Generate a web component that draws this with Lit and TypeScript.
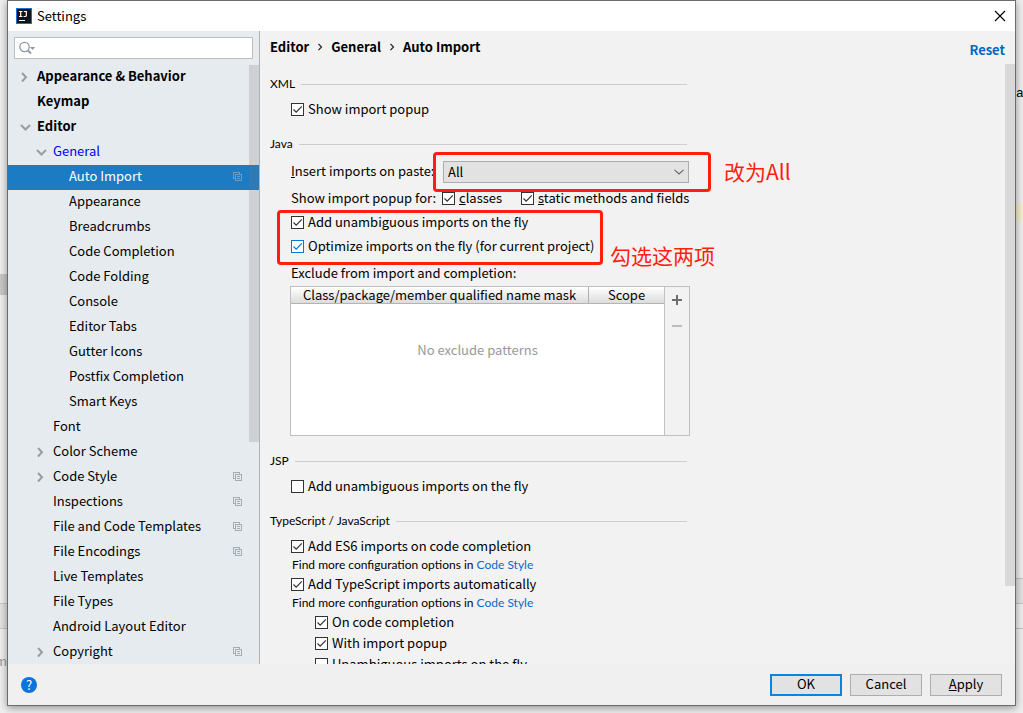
import { LitElement, html, css, svg, nothing } from "lit";
import { customElement, property } from "lit/decorators.js";

interface TreeItem {
  label: string;
  level: 1 | 2 | 3;
  arrow?: "open" | "closed";
  shared?: boolean;
  selected?: boolean;
  modified?: boolean;
}

const TREE: TreeItem[] = [
  { label: "Appearance & Behavior", level: 1, arrow: "closed" },
  { label: "Keymap", level: 1 },
  { label: "Editor", level: 1, arrow: "open" },
  { label: "General", level: 2, arrow: "open", modified: true },
  { label: "Auto Import", level: 3, shared: true, selected: true },
  { label: "Appearance", level: 3 },
  { label: "Breadcrumbs", level: 3 },
  { label: "Code Completion", level: 3 },
  { label: "Code Folding", level: 3 },
  { label: "Console", level: 3 },
  { label: "Editor Tabs", level: 3 },
  { label: "Gutter Icons", level: 3 },
  { label: "Postfix Completion", level: 3 },
  { label: "Smart Keys", level: 3 },
  { label: "Font", level: 2 },
  { label: "Color Scheme", level: 2, arrow: "closed" },
  { label: "Code Style", level: 2, arrow: "closed", shared: true },
  { label: "Inspections", level: 2, shared: true },
  { label: "File and Code Templates", level: 2, shared: true },
  { label: "File Encodings", level: 2, shared: true },
  { label: "Live Templates", level: 2 },
  { label: "File Types", level: 2 },
  { label: "Android Layout Editor", level: 2 },
  { label: "Copyright", level: 2, arrow: "closed", shared: true },
];

@customElement("settings-tree")
class SettingsTree extends LitElement {
  static styles = css`
    :host {
      display: flex;
      flex-direction: column;
      min-height: 0;
      background: #e6ebf0;
      border-right: 1px solid #b0b3b6;
    }
    .search {
      display: flex;
      align-items: center;
      height: 22px;
      box-sizing: border-box;
      margin: 6px;
      padding-left: 4px;
      background: #fff;
      border: 1px solid #bdbdbd;
    }
    .search input {
      flex: 1;
      min-width: 0;
      border: 0;
      outline: 0;
      background: none;
      font: inherit;
    }
    .scroller {
      flex: 1;
      min-height: 0;
      overflow: hidden;
      position: relative;
    }
    .list {
      margin: 0;
      padding: 0;
      list-style: none;
    }
    .row {
      display: flex;
      align-items: center;
      gap: 4px;
      height: 25px;
      box-sizing: border-box;
      padding: 0 17px 2px 9px;
      white-space: nowrap;
    }
    .level-1 {
      font-weight: 700;
    }
    .level-2 {
      padding-left: 25px;
    }
    .level-3 {
      padding-left: 41px;
    }
    .modified {
      color: #0000ff;
    }
    .selected {
      background: #1b7cc4;
      color: #fff;
    }
    .arrow {
      flex: none;
      width: 16px;
      height: 16px;
    }
    .label {
      flex: 1;
      padding-bottom: 1px;
    }
    .thumb {
      position: absolute;
      top: 0;
      right: 0;
      width: 10px;
      height: 63%;
      background: rgba(120, 120, 124, 0.22);
    }
  `;

  private arrow(kind?: "open" | "closed") {
    return html`<svg class="arrow" viewBox="0 0 16 16" fill="none" stroke="#9a9da0" stroke-width="2">
      ${kind === "open"
        ? svg`<path d="M4 6 L8.5 10.5 L13 6" />`
        : kind === "closed"
          ? svg`<path d="M5 4 L9 8.25 L5 12.5" />`
          : nothing}
    </svg>`;
  }

  render() {
    return html`
      <label class="search">
        <svg width="18" height="16" viewBox="0 0 18 16" fill="none" stroke="#8b98a5">
          <circle cx="5.5" cy="7" r="4.7" stroke-width="1.3" />
          <path d="M9 10.5 L12 13.5" stroke-width="1.8" />
          <path d="M11 7 H16 L13.5 10 Z" fill="#8b98a5" stroke="none" />
        </svg>
        <input type="text" aria-label="Search settings" />
      </label>
      <div class="scroller">
        <ul class="list">
          ${TREE.map(
            (item) => html`<li
              class="row level-${item.level} ${item.selected ? "selected" : ""} ${item.modified ? "modified" : ""}"
            >
              ${this.arrow(item.arrow)}
              <span class="label">${item.label}</span>
              ${item.shared
                ? html`<svg
                    width="9"
                    height="9"
                    viewBox="0 0 9 9"
                    fill="none"
                    stroke=${item.selected ? "#6c9dc4" : "#a3adb6"}
                    shape-rendering="crispEdges"
                  >
                    <path d="M2 6.5 H0.5 V0.5 H6.5 V2" />
                    <path d="M2.5 2.5 H8.5 V8.5 H2.5 Z M4 4.5 H7 M4 6.5 H7" />
                  </svg>`
                : nothing}
            </li>`
          )}
        </ul>
        <div class="thumb"></div>
      </div>
    `;
  }
}

@customElement("check-option")
class CheckOption extends LitElement {
  @property() label = "";
  @property() mnemonic = "";
  @property({ type: Boolean }) checked = false;
  @property({ type: Boolean }) active = false;

  static styles = css`
    :host {
      display: block;
    }
    .option {
      display: flex;
      align-items: center;
      gap: 4px;
      height: 20px;
      box-sizing: border-box;
      padding-bottom: 1px;
      white-space: nowrap;
    }
    .text {
      padding-bottom: 1px;
    }
    .box {
      flex: none;
      appearance: none;
      box-sizing: border-box;
      width: 13px;
      height: 13px;
      margin: 0;
      border: 1px solid #333;
      background: #fff;
    }
    .box:checked {
      background: #fff
        url("data:image/svg+xml,%3Csvg xmlns='http://www.w3.org/2000/svg' viewBox='0 0 11 11'%3E%3Cpath d='M1.5 5.5 L4.2 8.2 L9.8 2.4' fill='none' stroke='%23333' stroke-width='1.2'/%3E%3C/svg%3E");
    }
    .active {
      border-color: #0078d7;
    }
    .active:checked {
      background: #fff
        url("data:image/svg+xml,%3Csvg xmlns='http://www.w3.org/2000/svg' viewBox='0 0 11 11'%3E%3Cpath d='M1.5 5.5 L4.2 8.2 L9.8 2.4' fill='none' stroke='%230078d7' stroke-width='1.2'/%3E%3C/svg%3E");
    }
  `;

  render() {
    return html`<label class="option">
      <input class="box ${this.active ? "active" : ""}" type="checkbox" .checked=${this.checked} />
      <span class="text">${this.mnemonic ? html`<u>${this.mnemonic}</u>` : nothing}${this.label}</span>
    </label>`;
  }
}

@customElement("auto-import-page")
class AutoImportPage extends LitElement {
  static styles = css`
    :host {
      display: flex;
      flex-direction: column;
      min-height: 0;
      min-width: 0;
      background: #f2f2f2;
    }
    .top {
      display: flex;
      justify-content: space-between;
      height: 33px;
      padding: 0 10px;
      font-weight: 700;
    }
    .crumbs {
      display: flex;
      align-items: center;
      gap: 8px;
      padding-bottom: 1px;
    }
    .reset {
      align-self: flex-end;
      line-height: 28px;
      color: #0068c0;
      text-decoration: none;
    }
    .scroller {
      flex: 1;
      min-height: 0;
      overflow: hidden;
      position: relative;
    }
    .thumb {
      position: absolute;
      top: 0;
      right: 0;
      width: 10px;
      height: 87%;
      background: #d9d9d9;
    }
    .form {
      max-width: 420px;
      padding: 10px 10px 0;
    }
    .group {
      display: flex;
      align-items: center;
      gap: 6px;
      height: 20px;
      margin: 14px 3px 6px 0;
      font-family: Lato, sans-serif;
      font-size: 12px;
    }
    .group:first-child {
      margin-top: 0;
    }
    .group::after {
      content: "";
      flex: 1;
      height: 1px;
      background: #cdcdcd;
    }
    .body {
      padding-left: 21px;
    }
    .stack {
      display: grid;
      gap: 4px;
    }
    .paste {
      position: relative;
      display: grid;
      grid-template-columns: 152px minmax(0, 1fr);
      align-items: center;
      margin: 7px 1px 6px 0;
      white-space: nowrap;
    }
    .combo {
      height: 22px;
      appearance: none;
      padding: 0 4px;
      border: 1px solid #adadad;
      border-radius: 0;
      color: #000;
      font: inherit;
      background: #e2e2e2
        url("data:image/svg+xml,%3Csvg xmlns='http://www.w3.org/2000/svg' width='10' height='6'%3E%3Cpath d='M0.5 0.8 L5 5 L9.5 0.8' fill='none' stroke='%23666' stroke-width='1.1'/%3E%3C/svg%3E")
        no-repeat right 4px center;
    }
    .popup-for {
      display: grid;
      grid-template-columns: 151px 79px auto;
      align-items: center;
      margin-bottom: 4px;
      white-space: nowrap;
    }
    .text {
      padding-bottom: 2px;
    }
    .onfly {
      position: relative;
    }
    .mark {
      position: absolute;
      border: 3px solid #ff1e10;
      border-radius: 4px;
      pointer-events: none;
    }
    .note {
      position: absolute;
      color: #ff1e10;
      font: 400 21px/24px "Noto Sans CJK SC", sans-serif;
      white-space: nowrap;
    }
    .mark-paste {
      inset: -9px -22px -9px 142px;
    }
    .note-paste {
      left: calc(100% + 35px);
      top: -2px;
    }
    .mark-fly {
      inset: -3px 87px -8px -14px;
    }
    .note-fly {
      left: calc(100% - 80px);
      top: 30px;
    }
    .caption {
      margin: 6px 0 3px;
      line-height: 20px;
    }
    .patterns {
      display: flex;
      height: 150px;
      box-sizing: border-box;
      margin: 0 0 15px -1px;
      border: 1px solid #c0c0c0;
    }
    .grid {
      flex: 1;
      display: flex;
      flex-direction: column;
      background: #fff;
    }
    .grid table {
      width: 100%;
      border-collapse: collapse;
      table-layout: fixed;
    }
    .grid th {
      height: 16px;
      padding: 0;
      line-height: 16px;
      font-weight: 400;
      background: linear-gradient(#fff, #dcdcdc);
      border-bottom: 1px solid #b4b4b4;
    }
    .grid th + th {
      width: 75px;
      border-left: 1px solid #b0b0b0;
    }
    .empty {
      margin-top: 36px;
      line-height: 20px;
      text-align: center;
      color: #999;
    }
    .tools {
      display: flex;
      flex-direction: column;
      align-items: center;
      width: 24px;
      border-left: 1px solid #c0c0c0;
    }
    .tool {
      display: flex;
      align-items: center;
      justify-content: center;
      width: 24px;
      height: 26px;
      padding: 0;
      border: 0;
      background: none;
    }
    .hint {
      margin: 0 0 2px 1px;
      font-family: Lato, sans-serif;
      font-size: 12px;
      line-height: 16px;
      white-space: nowrap;
    }
    .hint a {
      color: #0a6ac8;
      text-decoration: none;
    }
    .nested {
      display: grid;
      gap: 1px;
      padding-left: 24px;
    }
  `;

  private hint() {
    return html`<p class="hint">Find more configuration options in <a href="#code-style">Code Style</a></p>`;
  }

  private crumbArrow() {
    return html`<svg width="6" height="8" viewBox="0 0 6 8" fill="none" stroke="#222" stroke-width="1.2">
      <path d="M1.5 0.8 L4.5 4 L1.5 7.2" />
    </svg>`;
  }

  render() {
    return html`
      <div class="top">
        <nav class="crumbs">
          <span>Editor</span>${this.crumbArrow()}<span>General</span>${this.crumbArrow()}<span>Auto Import</span>
        </nav>
        <a class="reset" href="#reset">Reset</a>
      </div>
      <div class="scroller">
        <div class="form">
          <div class="group">XML</div>
          <div class="body"><check-option checked label="Show import popup"></check-option></div>

          <div class="group">Java</div>
          <div class="body">
            <div class="paste">
              <label class="text" for="paste"><u>I</u>nsert imports on paste:</label>
              <select id="paste" class="combo">
                <option>All</option>
                <option>Ask</option>
                <option>None</option>
              </select>
              <div class="mark mark-paste"></div>
              <span class="note note-paste">改为All</span>
            </div>
            <div class="popup-for">
              <span class="text">Show import popup for:</span>
              <check-option checked mnemonic="c" label="lasses"></check-option>
              <check-option checked mnemonic="s" label="tatic methods and fields"></check-option>
            </div>
            <div class="onfly stack">
              <check-option checked label="Add unambiguous imports on the fly"></check-option>
              <check-option checked active label="Optimize imports on the fly (for current project)"></check-option>
              <div class="mark mark-fly"></div>
              <span class="note note-fly">勾选这两项</span>
            </div>
            <div class="caption">Exclude from import and completion:</div>
            <div class="patterns">
              <div class="grid">
                <table>
                  <thead>
                    <tr>
                      <th>Class/package/member qualified name mask</th>
                      <th>Scope</th>
                    </tr>
                  </thead>
                </table>
                <div class="empty">No exclude patterns</div>
              </div>
              <div class="tools">
                <button class="tool" aria-label="Add">
                  <svg width="10" height="10" viewBox="0 0 10 10"><path d="M4 0h2v4h4v2H6v4H4V6H0V4h4z" fill="#6e6e6e" /></svg>
                </button>
                <button class="tool" aria-label="Remove" disabled>
                  <svg width="10" height="10" viewBox="0 0 10 10"><path d="M0 4h10v2H0z" fill="#bdbdbd" /></svg>
                </button>
              </div>
            </div>
          </div>

          <div class="group">JSP</div>
          <div class="body"><check-option label="Add unambiguous imports on the fly"></check-option></div>

          <div class="group">TypeScript / JavaScript</div>
          <div class="body">
            <check-option checked label="Add ES6 imports on code completion"></check-option>
            ${this.hint()}
            <check-option checked label="Add TypeScript imports automatically"></check-option>
            ${this.hint()}
            <div class="nested">
              <check-option checked label="On code completion"></check-option>
              <check-option checked label="With import popup"></check-option>
              <check-option label="Unambiguous imports on the fly"></check-option>
            </div>
          </div>
        </div>
        <div class="thumb"></div>
      </div>
    `;
  }
}

@customElement("app-root")
class AppRoot extends LitElement {
  static styles = css`
    :host {
      display: grid;
      grid-template-columns: 7px minmax(0, 1fr) 7px;
      grid-template-rows: minmax(0, 1fr);
      height: 100vh;
      overflow: hidden;
      background: #efefef;
      color: #000;
      font: 13px/18px "Noto Sans CJK SC", sans-serif;
    }
    .edge {
      display: flex;
      flex-direction: column;
      overflow: hidden;
    }
    .edge-scroll {
      flex: none;
      height: 21px;
      margin-top: 274px;
      background: #c8c8c8;
    }
    .edge-bar {
      flex: none;
      height: 24px;
      border: solid #c4c4c4;
      border-width: 1px 0;
      background: #e2e2e2;
    }
    .left .edge-bar {
      margin-top: 308px;
    }
    .edge-text {
      margin-top: 23px;
      color: #999;
      direction: rtl;
    }
    .edge-code {
      margin-top: 85px;
      font-family: "Liberation Mono", monospace;
    }
    .edge-warn {
      flex: none;
      height: 17px;
      margin-top: 101px;
      background: #f5efd0;
    }
    .right .edge-bar {
      margin-top: 357px;
    }
    .edge-rule {
      height: 24px;
      border-bottom: 1px solid #c4c4c4;
    }
    .dialog {
      position: relative;
      display: grid;
      grid-template-rows: 30px minmax(0, 1fr) 41px;
      margin-bottom: 7px;
      border: 1px solid #6c6c6e;
      background: #f0f0f0;
      box-shadow: 0 2px 8px rgba(0, 0, 0, 0.4);
    }
    .title {
      display: flex;
      align-items: center;
      gap: 5px;
      padding: 0 9px 0 8px;
      background: #fff;
    }
    .title-text {
      flex: 1;
      padding-bottom: 1px;
    }
    .close {
      display: flex;
      padding: 0;
      border: 0;
      background: none;
    }
    .main {
      display: grid;
      grid-template-columns: 252px minmax(0, 1fr);
      grid-template-rows: minmax(0, 1fr);
      min-height: 0;
    }
    .footer {
      display: flex;
      align-items: center;
      gap: 8px;
      padding: 0 13px;
    }
    .help {
      width: 16px;
      height: 16px;
      margin-right: auto;
      padding: 0;
      border: 0;
      border-radius: 50%;
      background: #0b74da;
      color: #fff;
      font: inherit;
      line-height: 16px;
    }
    .btn {
      width: 72px;
      height: 22px;
      padding: 0 0 1px;
      border: 1px solid #adadad;
      background: #e2e2e2;
      color: #000;
      font: inherit;
      line-height: 16px;
    }
    .primary {
      border: 2px solid #0a84dc;
    }
  `;

  render() {
    return html`
      <div class="edge left">
        <div class="edge-scroll"></div>
        <div class="edge-bar"></div>
        <div class="edge-text">m</div>
      </div>
      <div class="dialog" role="dialog" aria-label="Settings">
        <header class="title">
          <svg width="16" height="16" viewBox="0 0 16 16">
            <rect width="16" height="16" fill="#1a6fd0" />
            <rect x="1" y="1" width="14" height="14" fill="#101318" />
            <path
              d="M3 3.5 H6.4 M4.7 3.5 V8.5 M3 8.5 H6.4 M7.8 3.5 H11 M10.3 3.5 V7.2 Q10.3 8.5 9 8.5 H7.6"
              fill="none"
              stroke="#fff"
              stroke-width="1.2"
            />
            <rect x="3" y="12" width="6" height="1" fill="#fff" />
          </svg>
          <span class="title-text">Settings</span>
          <button class="close" aria-label="Close">
            <svg width="12" height="12" viewBox="0 0 12 12" stroke="#000" stroke-width="1.1">
              <path d="M1 1 L11 11 M11 1 L1 11" />
            </svg>
          </button>
        </header>
        <div class="main">
          <settings-tree></settings-tree>
          <auto-import-page></auto-import-page>
        </div>
        <footer class="footer">
          <button class="help" aria-label="Help">?</button>
          <button class="btn primary">OK</button>
          <button class="btn">Cancel</button>
          <button class="btn"><u>A</u>pply</button>
        </footer>
      </div>
      <div class="edge right">
        <div class="edge-code">a:</div>
        <div class="edge-warn"></div>
        <div class="edge-bar"></div>
        <div class="edge-rule"></div>
      </div>
    `;
  }
}
